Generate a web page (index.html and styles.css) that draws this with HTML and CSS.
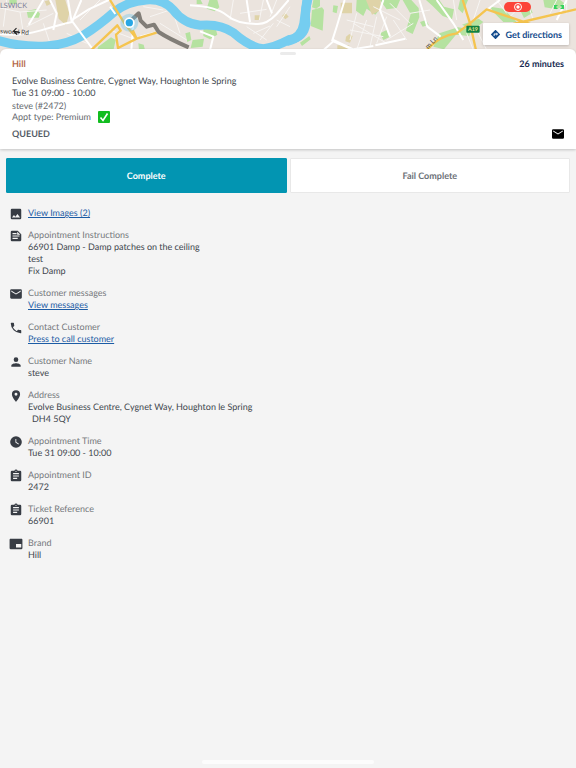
FILE: index.html
```html
<!DOCTYPE html>
<html lang="en">
<head>
    <meta charset="UTF-8">
    <meta name="viewport" content="width=device-width, initial-scale=1.0">
    <title>Appointment</title>
    <link rel="stylesheet" href="styles.css">
</head>
<body>

    <div class="map">
        <svg class="map-tiles" viewBox="0 0 1728 168" preserveAspectRatio="xMidYMin slice" aria-hidden="true">
            <rect width="1728" height="168" fill="#ebe4de"/>
            <!-- parks -->
            <g fill="#b5e2a0">
                <path d="M28 0h22v12H28zM80 33l28-6 12 14-4 12H84zM295 140l38-28 14 8-8 36h-50zM415 130l16 4 4 16h-18zM556 100l14-4 4 24-12 6zM578 120l34-4-4 24-36 4z"/>
                <path d="M590 0h12l6 12h-18zM628 0h24l6 22-14 12-24-8zM610 88l36-6 6 22-22 14-20-10zM940 0h20v18l-12 8-12-4zM936 30l30-8 6 8-4 62-36-14zM900 128l28-20 4 10-26 20zM1000 16l14 2-4 22-12-4zM1070 0h40l16 10-10 12 20 10-10 12-26-18-10 22-22-16z"/>
                <path d="M1140 0h60l-10 24-30 4zM1208 0h26l22 24 2 28-20 50-20-10 14-50zM1278 0h40l14 20 30 8-6 30-28-10-30-30zM1300 140l18-40 56-18 40 6-6 20-40-4-36 44zM1380 0h24l-16 40-14-14zM1386 74l50-18 14 10-30 24zM1470 20l40 6 40 40h-40l-30-30zM1630 0h50l20 14-30 14-36-6zM1560 30l30-8 8 16-26 16z"/>
                <path d="M1140 100l20-10 10 20-20 10zM1260 66l18-6 8 14-18 6z"/>
            </g>
            <g fill="#dfd3a8">
                <path d="M166 0h30l12 40-10 36-22-20zM134 4l14-4 8 10-16 8zM764 46h16v14h-16zM846 48l10-10 10 12-10 8zM1038 110l10-8 10 6-8 20-14-4zM1022 8h34v32h-34zM1098 0h44v30l-26 14zM1012 136h36v14h-36zM1450 96l20-6 8 20-20 6z"/>
            </g>
            <!-- minor streets -->
            <g fill="none" stroke="#f7f5f3" stroke-width="3">
                <path d="M0 24l60 12 80-6M60 36L70 100M20 0L10 80M80 80l80-40M150 130l-20-60M240 60l60-60M200 100l60 30M330 90l80 30M450 50l60-20 60 30M520 40l20 60M480 70l80 50M430 20l60 10"/>
                <path d="M700 0l-10 60M720 40l80-12M790 0l-12 60M830 0l-20 50M740 80l60 40M760 100l50-22M780 120l40-50M830 60l40 20M690 80l50 40M870 20l-40 60"/>
                <path d="M1040 60l80 20M1050 90l100 20M1070 40l-20 80M1100 60l-30 90M1130 50l-20 90M1160 50l-30 80M1120 20l80 40M1060 70l100 60"/>
                <path d="M1170 10l60 60M1180 60l40 60M1160 120l80-50M1230 40l60-10M1360 0l10 60M1440 0l-20 60M1490 0l30 40M1530 50l50-50M1400 100l20 50M1430 90l30 60M1600 60l-20-60M1650 40l20-40M1700 0v40"/>
            </g>
            <!-- river -->
            <g fill="none" stroke="#75cdf0">
                <path d="M-10 120Q60 142 140 138Q200 134 250 106Q300 74 340 38Q380 4 440 0Q490-4 520 30Q550 70 600 76Q660 70 700 98Q750 142 790 146Q820 144 870 118Q912 112 918 70Q912 30 926-10" stroke-width="27"/>
                <path d="M860 124Q905 116 912 70L922-6" stroke-width="28"/>
            </g>
            <!-- main streets -->
            <g fill="none" stroke="#fff" stroke-width="6">
                <path d="M0 102q60 8 120-10T216 66L244 0M204 0l10 60 66 90M86 74L130 0M150 0l20 40-10 50M216 60l50-32 60-28M330 20l16 22M400 70l-6 80M420 110l40-10"/>
                <path d="M570 16q80 4 110 30t90 26q30 2 60-30l36-42M740 0l10 66M800 0l16 40M600 94l40 16-10 40M1034 0l-24 80-14 44M960 160l40-36 70 30M1000 120l60 28 60-10M1150 0l-10 30 30 80M1126 136l90-20M1258 0l24 80 40 30M1310 0l50 70 30 50M1500 0l-40 30M1700 0l-30 60"/>
            </g>
            <g fill="none" stroke="#f5c44f" stroke-width="7" stroke-linejoin="round">
                <path d="M330 0l42 68 38 48 60-18M410 116l-56 28-6-40 14-12-10-16-80 76M398 90l12 26"/>
                <path d="M1280 150q40-44 90-50l40-30 50-42 136 46M1388 0l22 70 20 90M1540 72l188-44"/>
            </g>
            <path d="M392 62l24-22 6 22 18 18 22-6 14 22q30 20 90 46" fill="none" stroke="#817d77" stroke-width="12" stroke-linejoin="round"/>
            <circle cx="388" cy="68" r="27" fill="#5fc3ee" opacity=".35"/>
            <circle cx="388" cy="68" r="16" fill="#fff"/>
            <circle cx="388" cy="68" r="11" fill="#28a7e5"/>
            <rect x="1399" y="77" width="40" height="21" rx="3" fill="#118040"/>
            <text class="road-sign" x="1419" y="93" text-anchor="middle">A19</text>
            <text class="map-area" x="0" y="24">LSWICK</text>
            <text class="map-road" transform="translate(0 100) rotate(3)">swood Rd</text>
            <text class="map-road" transform="translate(1284 148) rotate(-46)">m Ln</text>
        </svg>

        <button class="back" type="button" aria-label="Back">
            <svg viewBox="0 0 24 24"><path d="M12 3L4 11l9 9M4 11l17 4" fill="none" stroke="#222" stroke-width="3"/></svg>
        </button>

        <div class="status">
            <span class="recording">
                <svg viewBox="0 0 10 10"><circle cx="5" cy="5" r="3.5" fill="none" stroke="#fff"/><circle cx="5" cy="5" r="1.7" fill="#fff"/></svg>
            </span>
            <svg class="battery" viewBox="0 0 12 6"><path fill="#35d25c" d="M1 1h4L3 3l2 2H1zM7 1h4v4H7l2-2z"/></svg>
        </div>

        <button class="directions" type="button">
            <svg viewBox="0 0 24 24"><path d="M21.7 11.3l-9-9a1 1 0 0 0-1.4 0l-9 9a1 1 0 0 0 0 1.4l9 9a1 1 0 0 0 1.4 0l9-9a1 1 0 0 0 0-1.4zM14 14.5V12h-4v3H8v-4a1 1 0 0 1 1-1h5V7.500l3.500 3.500z"/></svg>
            Get directions
        </button>
    </div>

    <div class="summary">
        <div class="handle"></div>
        <div class="summary-row">
            <span class="brand">Hill</span>
            <span class="duration">26 minutes</span>
        </div>
        <div class="visit">
            <p>Evolve Business Centre, Cygnet Way, Houghton le Spring</p>
            <p>Tue 31 09:00 - 10:00</p>
        </div>
        <div class="customer">
            <p>steve (#2472)</p>
            <p class="type">Appt type: Premium
                <svg viewBox="0 0 12 12"><rect width="12" height="12" rx="1" fill="#12bd20"/><path d="M2.500 6.500l2.500 3 4.500-7" fill="none" stroke="#fff" stroke-width="1.600"/></svg>
            </p>
        </div>
        <div class="summary-row">
            <span class="state">QUEUED</span>
            <svg class="mail" viewBox="2 4 20 16"><path d="M20 4H4a2 2 0 0 0-2 2v12a2 2 0 0 0 2 2h16a2 2 0 0 0 2-2V6a2 2 0 0 0-2-2zm0 4l-8 5-8-5V6l8 5 8-5z"/></svg>
        </div>
    </div>

    <div class="actions">
        <button class="complete" type="button">Complete</button>
        <button class="fail" type="button">Fail Complete</button>
    </div>

    <div class="details">
        <div class="item">
            <svg viewBox="0 0 24 24"><path d="M21 19V5a2 2 0 0 0-2-2H5a2 2 0 0 0-2 2v14a2 2 0 0 0 2 2h14a2 2 0 0 0 2-2zM8.500 13.500l2.500 3 3.500-4.500 4.500 6H5z"/></svg>
            <div><a href="#images">View Images (2)</a></div>
        </div>
        <div class="item">
            <svg viewBox="0 0 24 24"><path d="M15 3H5a2 2 0 0 0-2 2v14a2 2 0 0 0 2 2h14a2 2 0 0 0 2-2V9zM6 7h7v2H6zm9 10H6v-2h9zm3-4H6v-2h12zm-4-3V4.500l5.500 5.500z"/></svg>
            <div>
                <h2>Appointment Instructions</h2>
                <p>66901 Damp - Damp patches on the ceiling</p>
                <p>test</p>
                <p>Fix Damp</p>
            </div>
        </div>
        <div class="item">
            <svg viewBox="0 0 24 24"><path d="M20 4H4a2 2 0 0 0-2 2v12a2 2 0 0 0 2 2h16a2 2 0 0 0 2-2V6a2 2 0 0 0-2-2zm0 4l-8 5-8-5V6l8 5 8-5z"/></svg>
            <div>
                <h2>Customer messages</h2>
                <a href="#messages">View messages</a>
            </div>
        </div>
        <div class="item">
            <svg viewBox="0 0 24 24"><path d="M6.600 10.800a15 15 0 0 0 6.600 6.600l2.200-2.200a1 1 0 0 1 1-.24 11.400 11.400 0 0 0 3.600.57 1 1 0 0 1 1 1V20a1 1 0 0 1-1 1A17 17 0 0 1 3 4a1 1 0 0 1 1-1h3.500a1 1 0 0 1 1 1c0 1.250.2 2.450.57 3.570a1 1 0 0 1-.25 1z"/></svg>
            <div>
                <h2>Contact Customer</h2>
                <a href="#call">Press to call customer</a>
            </div>
        </div>
        <div class="item">
            <svg viewBox="0 0 24 24"><path d="M12 12a4 4 0 1 0 0-8 4 4 0 0 0 0 8zm0 2c-2.700 0-8 1.300-8 4v2h16v-2c0-2.700-5.300-4-8-4z"/></svg>
            <div>
                <h2>Customer Name</h2>
                <p>steve</p>
            </div>
        </div>
        <div class="item">
            <svg viewBox="0 0 24 24"><path d="M12 2a7 7 0 0 0-7 7c0 5.250 7 13 7 13s7-7.750 7-13a7 7 0 0 0-7-7zm0 9.500a2.500 2.500 0 1 1 0-5 2.500 2.500 0 0 1 0 5z"/></svg>
            <div>
                <h2>Address</h2>
                <p>Evolve Business Centre, Cygnet Way, Houghton le Spring</p>
                <p class="postcode">DH4 5QY</p>
            </div>
        </div>
        <div class="item">
            <svg viewBox="0 0 24 24"><path d="M12 2a10 10 0 1 0 0 20 10 10 0 0 0 0-20zm4.200 14.200L11 13V7h1.500v5.200l4.500 2.700z"/></svg>
            <div>
                <h2>Appointment Time</h2>
                <p>Tue 31 09:00 - 10:00</p>
            </div>
        </div>
        <div class="item">
            <svg viewBox="0 0 24 24"><path d="M19 3h-4.180a3 3 0 0 0-5.640 0H5a2 2 0 0 0-2 2v14a2 2 0 0 0 2 2h14a2 2 0 0 0 2-2V5a2 2 0 0 0-2-2zm-7 0a1 1 0 1 1 0 2 1 1 0 0 1 0-2zm2 14H7v-2h7zm3-4H7v-2h10zm0-4H7V7h10z"/></svg>
            <div>
                <h2>Appointment ID</h2>
                <p>2472</p>
            </div>
        </div>
        <div class="item">
            <svg viewBox="0 0 24 24"><path d="M19 3h-4.180a3 3 0 0 0-5.640 0H5a2 2 0 0 0-2 2v14a2 2 0 0 0 2 2h14a2 2 0 0 0 2-2V5a2 2 0 0 0-2-2zm-7 0a1 1 0 1 1 0 2 1 1 0 0 1 0-2zm2 14H7v-2h7zm3-4H7v-2h10zm0-4H7V7h10z"/></svg>
            <div>
                <h2>Ticket Reference</h2>
                <p>66901</p>
            </div>
        </div>
        <div class="item">
            <svg viewBox="0 0 24 24"><path d="M22 3H2a2 2 0 0 0-1 2v14a2 2 0 0 0 2 2h18a2 2 0 0 0 2-2V5a2 2 0 0 0-1-2zm-1 15h-9v-6h9z"/></svg>
            <div>
                <h2>Brand</h2>
                <p>Hill</p>
            </div>
        </div>
    </div>

    <div class="home-bar"></div>
</body>
</html>
```
FILE: styles.css
```css
* {
    box-sizing: border-box;
}
body {
    font-family: Lato, sans-serif;
    font-size: 9px;
    line-height: 12px;
    text-rendering: geometricPrecision;
    margin: 0;
    min-height: 100vh;
    display: flex;
    flex-direction: column;
    background-color: #f4f4f4;
    color: #40464d;
}
p, h2 {
    margin: 0;
}
button {
    font-family: inherit;
    font-size: 9px;
    font-weight: bold;
    text-rendering: inherit;
    cursor: pointer;
}
a {
    color: #1c5ca5;
}

.map {
    position: relative;
}
.map-tiles {
    display: block;
    width: 100%;
    height: 56px;
}
.map-area {
    font-size: 22px;
    fill: #7d7f98;
}
.map-road {
    font-size: 20px;
    fill: #444;
}
.road-sign {
    font-size: 16px;
    font-weight: bold;
    fill: #e8e58c;
}
.back {
    position: absolute;
    left: 12px;
    top: 27px;
    padding: 0;
    border: none;
    background: none;
}
.back svg {
    display: block;
    width: 9px;
    height: 9px;
}
.status {
    position: absolute;
    top: 2px;
    right: 11px;
    display: flex;
    align-items: center;
    gap: 22px;
}
.recording {
    display: flex;
    justify-content: center;
    width: 27px;
    border-radius: 5px;
    background-color: #fc4338;
}
.recording svg {
    width: 10px;
    height: 10px;
}
.battery {
    width: 12px;
    height: 6px;
}
.directions {
    position: absolute;
    right: 7px;
    top: 23px;
    display: flex;
    align-items: center;
    gap: 4px;
    height: 22px;
    padding: 0 7px;
    border: none;
    border-radius: 1px;
    background-color: white;
    box-shadow: 0 1px 3px rgba(0, 0, 0, 0.2);
    color: #134b8c;
}
.directions svg {
    width: 11px;
    height: 11px;
    fill: #134b8c;
}

.summary {
    position: relative;
    margin-top: -7px;
    padding: 3px 12px 9px;
    border-radius: 6px 6px 0 0;
    background-color: white;
    box-shadow: 0 1px 3px rgba(0, 0, 0, 0.2);
}
.handle {
    width: 16px;
    height: 3px;
    margin: 0 auto 3px;
    border-radius: 2px;
    background-color: #ebebeb;
}
.summary-row {
    display: flex;
    justify-content: space-between;
    align-items: center;
    font-weight: bold;
}
.brand {
    color: #b5694a;
}
.duration {
    color: #14284f;
}
.visit {
    margin-top: 5px;
}
.customer {
    margin: 1px 0 6px;
    line-height: 11px;
    color: #65696e;
}
.type {
    display: flex;
    align-items: center;
    gap: 7px;
    height: 11px;
}
.type svg {
    width: 12px;
    height: 12px;
}
.state {
    color: #555d66;
}
.mail {
    width: 12px;
    height: 10px;
}

.actions {
    display: flex;
    gap: 3px;
    padding: 9px 6px 14px;
}
.actions button {
    flex: 1;
    height: 35px;
    border: 1px solid #e8e8e8;
    border-radius: 1px;
}
.actions .complete {
    border-color: #0295b2;
    background-color: #0295b2;
    color: white;
}
.actions .fail {
    background-color: white;
    color: #6b7076;
}

.details {
    display: flex;
    flex-direction: column;
    gap: 10px;
    padding: 0 9px;
}
.item {
    display: flex;
    gap: 5px;
}
.item svg {
    flex: none;
    width: 14px;
    height: 14px;
    margin-bottom: -2px;
    fill: #373c44;
}
.item h2 {
    font-size: 9px;
    font-weight: normal;
    color: #74787c;
}
.postcode {
    padding-left: 4px;
}

.home-bar {
    width: 30%;
    height: 4px;
    margin: auto auto 4px;
    border-radius: 2px;
    background-color: #fcfcfc;
}
```
